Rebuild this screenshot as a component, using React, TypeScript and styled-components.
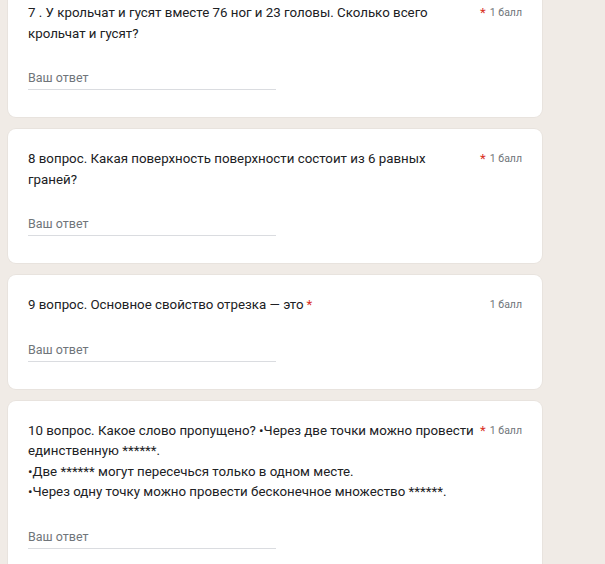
import React from "react";
import styled, { createGlobalStyle } from "styled-components";

const Global = createGlobalStyle`
  html, body { margin: 0; padding: 0; }
  body {
    background: #f0ebe6;
    font-family: Roboto, "Noto Sans", Arial, sans-serif;
    overflow: hidden;
  }
`;

const Page = styled.div`
  width: 605px;
  height: 564px;
  overflow: hidden;
  background: #f0ebe6;
`;

const List = styled.div`
  display: flex;
  flex-direction: column;
  gap: 12px;
  width: 534px;
  margin: -17px 0 0 8px;
`;

const Card = styled.section`
  background: #fff;
  border-radius: 8px;
  padding: 20px 20px 27px 20px;
  box-shadow: 0 0 0 1px rgba(0, 0, 0, 0.03);
`;

const Header = styled.div`
  display: flex;
  align-items: flex-start;
`;

const TitleWrap = styled.div`
  flex: 1 1 auto;
  min-width: 0;
  display: flex;
  align-items: flex-start;
`;

const Title = styled.div`
  flex: 0 1 auto;
  font-size: 13.3px;
  line-height: 20.5px;
  color: #202124;
  white-space: pre-wrap;
`;

const Star = styled.span`
  flex: 0 0 auto;
  color: #d93025;
  font-size: 13.3px;
  line-height: 20.5px;
  margin-left: 3px;
`;

const Points = styled.span`
  flex: 0 0 auto;
  margin-left: 4px;
  font-size: 10.5px;
  line-height: 20.5px;
  color: #70757a;
`;

const Answer = styled.div`
  margin-top: 24px;
  width: 248px;
  padding-bottom: 1px;
  border-bottom: 1px solid #dadce0;
  font-size: 12.5px;
  line-height: 20px;
  color: #70757a;
`;

type Q = { title: string };

const questions: Q[] = [
  { title: "7 . У крольчат и гусят вместе 76 ног и 23 головы. Сколько всего крольчат и гусят?" },
  { title: "8 вопрос. Какая поверхность поверхности состоит из 6 равных граней?" },
  { title: "9 вопрос. Основное свойство отрезка — это" },
  {
    title:
      "10 вопрос. Какое слово пропущено? •Через две точки можно провести единственную ******.\n•Две ****** могут пересечься только в одном месте.\n•Через одну точку можно провести бесконечное множество ******.",
  },
];

export default function App() {
  return (
    <Page>
      <Global />
      <List>
        {questions.map((q, i) => (
          <Card key={i}>
            <Header>
              <TitleWrap>
                <Title>{q.title}</Title>
                <Star>*</Star>
              </TitleWrap>
              <Points>1 балл</Points>
            </Header>
            <Answer>Ваш ответ</Answer>
          </Card>
        ))}
      </List>
    </Page>
  );
}
